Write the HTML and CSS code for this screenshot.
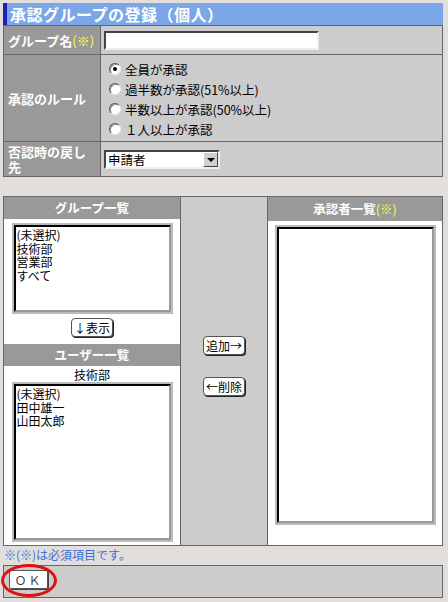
FILE: index.html
```html
<!DOCTYPE html>
<html lang="ja">
<head>
<meta charset="utf-8">
<link rel="stylesheet" href="styles.css">
</head>
<body>
<div class="page">
  <div class="title">承認グループの登録（個人）</div>
  <table class="form">
    <tr class="r1">
      <th class="nowrap">グループ名<span class="req">(※)</span></th>
      <td><input class="text" type="text"></td>
    </tr>
    <tr class="r2">
      <th>承認のルール</th>
      <td>
        <div class="radios">
          <label><input type="radio" name="rule" checked>全員が承認</label>
          <label><input type="radio" name="rule">過半数が承認(51%以上)</label>
          <label><input type="radio" name="rule">半数以上が承認(50%以上)</label>
          <label><input type="radio" name="rule">１人以上が承認</label>
        </div>
      </td>
    </tr>
    <tr class="r3">
      <th>否認時の戻し先</th>
      <td><div class="select"><span>申請者</span><span class="arrow"></span></div></td>
    </tr>
  </table>

  <div class="panels">
    <div class="col left">
      <div class="head">グループ一覧</div>
      <div class="list l1">
        <div>(未選択)</div><div>技術部</div><div>営業部</div><div>すべて</div>
      </div>
      <div class="btnrow"><span class="btn">↓表示</span></div>
      <div class="head h2">ユーザー一覧</div>
      <div class="dept">技術部</div>
      <div class="list l2">
        <div>(未選択)</div><div>田中雄一</div><div>山田太郎</div>
      </div>
    </div>
    <div class="col mid">
      <span class="btn">追加→</span>
      <span class="btn">←削除</span>
    </div>
    <div class="col right">
      <div class="head">承認者一覧<span class="req">(※)</span></div>
      <div class="list l3"></div>
    </div>
  </div>
  <div class="note">※(※)は必須項目です。</div>
  <div class="okbar">
    <span class="okwrap"><span class="btn ok">ＯＫ</span><span class="ring"></span></span>
  </div>
</div>
</body>
</html>
```

FILE: styles.css
```css
html, body { margin: 0; padding: 0; }
body {
  background: #e1dedc;
  font-family: "Noto Sans CJK JP", "Noto Sans", sans-serif;
  font-size: 12px;
  color: #000;
}
.page { padding: 3px 5px 0 3px; width: 440px; }
.title {
  height: 22px;
  line-height: 22px;
  background: #7ba7e9;
  border-left: 4px solid #2020b8;
  color: #fff;
  font-size: 16px;
  font-weight: bold;
  padding-left: 3px;
  box-sizing: border-box;
  letter-spacing: 0.5px;
}
.form {
  width: 440px;
  border-collapse: collapse;
  border: 1px solid #666;
  border-top: none;
}
.form th, .form td {
  border: 1px solid #666;
  padding: 0;
}
.form th {
  width: 97px;
  background: #999;
  color: #fff;
  font-weight: bold;
  text-align: left;
  padding: 0 10px 0 4px;
  font-size: 13px;
  line-height: 15px;
  box-sizing: border-box;
}
.form th.nowrap { white-space: nowrap; padding-right: 0; }
.form td { background: #ccc; padding-left: 3px; font-size: 12.5px; }
.req { color: #ffff44; font-weight: normal; }
.r1 { height: 29px; }
.r2 { height: 87px; }
.r3 { height: 35px; }
.text {
  width: 215px;
  height: 19px;
  box-sizing: border-box;
  margin: 0;
  border: 2px solid;
  border-color: #444 #eee #eee #444;
  background: #fff;
  display: block;
}
.radios { display: flex; flex-direction: column; padding: 2px 0 0 5px; }
.radios label { height: 20px; display: flex; align-items: center; }
.radios input {
  appearance: none;
  -webkit-appearance: none;
  margin: 0 4px 0 0;
  width: 12px;
  height: 12px;
  border-radius: 50%;
  border: 1px solid;
  border-color: #555 #eee #eee #555;
  background: #fff;
  box-shadow: inset 1px 1px 0 #999;
  position: relative;
  box-sizing: border-box;
}
.radios input:checked::after {
  content: "";
  position: absolute;
  left: 3px; top: 3px;
  width: 4px; height: 4px;
  border-radius: 50%;
  background: #000;
}
.select {
  width: 116px;
  height: 19px;
  box-sizing: border-box;
  border: 2px solid;
  border-color: #444 #eee #eee #444;
  background: #fff;
  display: flex;
  align-items: center;
  justify-content: space-between;
  padding-left: 2px;
}
.arrow {
  width: 15px;
  height: 15px;
  box-sizing: border-box;
  background: #d4d0c8;
  border: 1px solid;
  border-color: #fff #444 #444 #fff;
  position: relative;
}
.arrow::after {
  content: "";
  position: absolute;
  left: 3px; top: 5px;
  border-left: 4px solid transparent;
  border-right: 4px solid transparent;
  border-top: 4px solid #000;
}
.panels {
  margin-top: 19px;
  display: flex;
  height: 350px;
  border: 1px solid #666;
  box-sizing: border-box;
  width: 440px;
}
.col { box-sizing: border-box; }
.left { width: 177px; background: #fff; border-right: 1px solid #666; display: flex; flex-direction: column; align-items: center; }
.mid { width: 87px; background: #ccc; border-right: 1px solid #666; display: flex; flex-direction: column; align-items: center; padding-top: 139px; gap: 22px; }
.right { flex: 1; background: #fff; display: flex; flex-direction: column; align-items: center; }
.head {
  align-self: stretch;
  background: #999;
  color: #fff;
  font-weight: bold;
  text-align: center;
  height: 22px;
  line-height: 22px;
  font-size: 12.5px;
}
.right .head { height: 24px; line-height: 24px; }
.list {
  background: #fff;
  border: 2px solid;
  border-color: #000 #999 #999 #000;
  outline: 2px solid #bbb;
  box-sizing: border-box;
  line-height: 13.5px;
  padding: 1px 1px;
  width: 157px;
}
.l1 { margin-top: 6px; height: 87px; }
.btnrow { height: 24px; display: flex; align-items: center; padding-top: 3px; }
.h2 { margin-top: 5px; }
.dept { height: 17px; line-height: 17px; }
.l2 { margin-top: 1px; height: 156px; }
.l3 { margin-top: 6px; width: 157px; height: 296px; }
.btn {
  display: inline-block;
  background: #fff;
  border: 1px solid #555;
  border-radius: 4px;
  box-shadow: 1px 1px 0 #222;
  font-size: 12px;
  line-height: 17px;
  padding: 0 2px;
  color: #000;
}
.note {
  color: #3b6fd6;
  height: 19px;
  line-height: 18px;
  padding-left: 1px;
}
.okbar {
  height: 33px;
  background: #ccc;
  border: 1px solid #666;
  box-sizing: border-box;
  width: 440px;
  padding: 4px 0 0 5px;
}
.okwrap { position: relative; display: inline-block; }
.ok { width: 37px; text-align: center; color: #444; padding: 0; border-radius: 2px; box-shadow: 1px 1px 0 #444; letter-spacing: 2px; }
.ring {
  position: absolute;
  left: -8px; top: -6px;
  width: 50px; height: 27px;
  border: 3px solid #e01010;
  border-radius: 50%;
}
```
